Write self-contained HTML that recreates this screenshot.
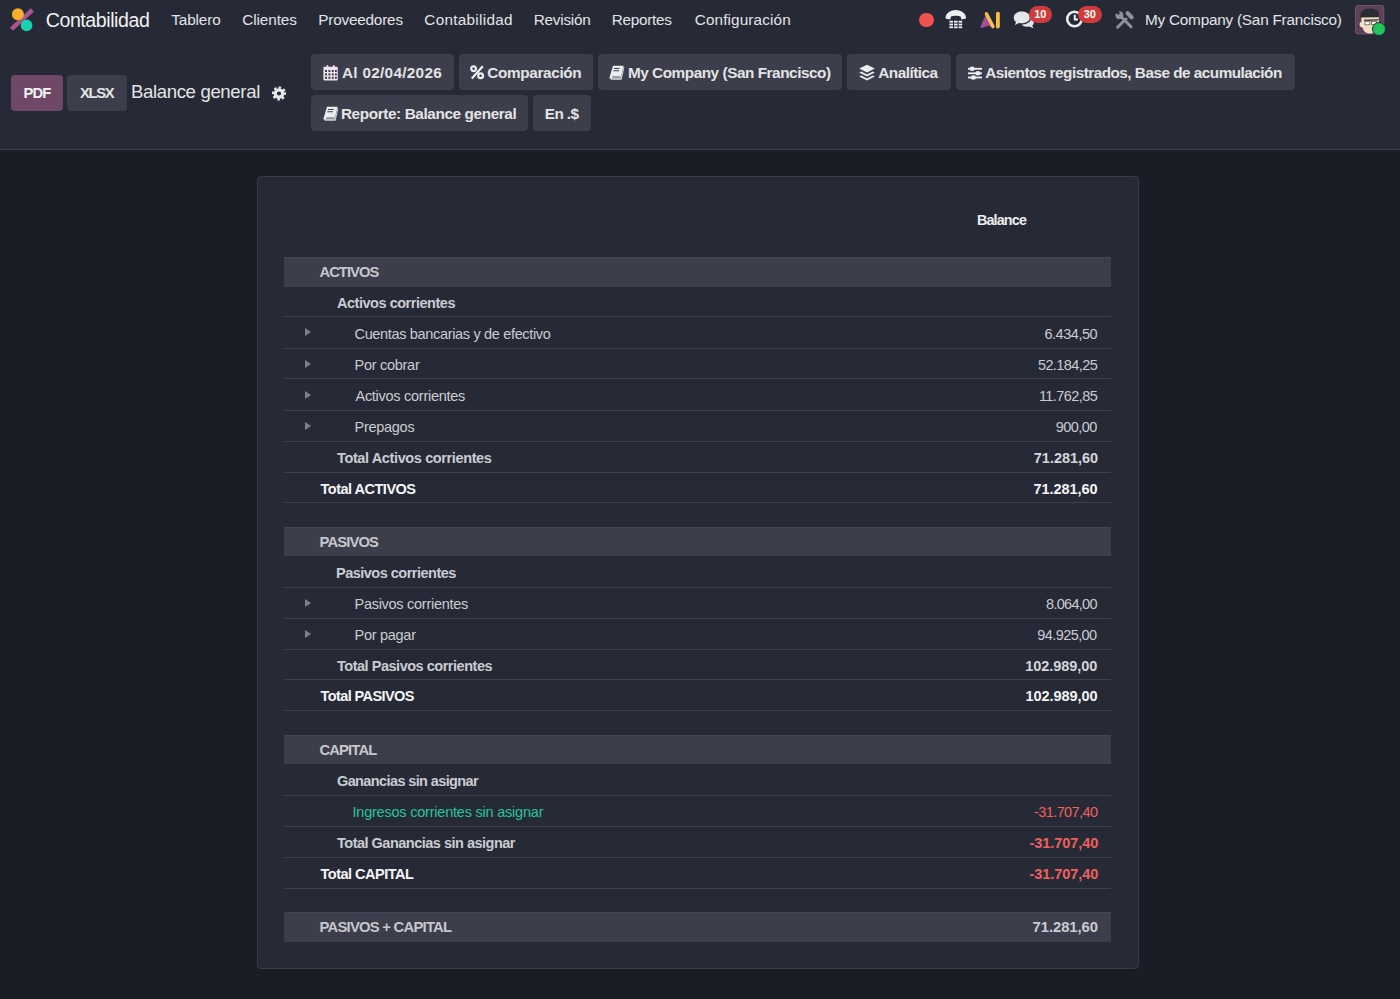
<!DOCTYPE html>
<html><head><meta charset="utf-8">
<style>
html,body{margin:0;padding:0;}
body{width:1400px;height:999px;overflow:hidden;background:#1B1D26;font-family:"Liberation Sans",sans-serif;position:relative;}
.a{position:absolute;}
.tx{position:absolute;white-space:nowrap;}
.hdr{position:absolute;left:0;top:0;width:1400px;height:149px;background:#262A36;border-bottom:1px solid #3A3D4A;}
.btn{position:absolute;height:36px;background:#3C3E4B;border-radius:4px;}
.card{position:absolute;left:257px;top:176px;width:882px;height:793px;background:#262A36;border:1px solid #393C48;border-radius:4px;box-sizing:border-box;}
.row{position:absolute;left:284px;width:827px;box-sizing:border-box;border-bottom:1px solid #3D404D;}
.bar{position:absolute;left:284px;width:827px;background:#3C3E4B;box-sizing:border-box;border-top:1px solid #444655;}
.car{position:absolute;left:305px;width:0;height:0;border-top:4.5px solid transparent;border-bottom:4.5px solid transparent;border-left:6px solid #7D808A;}
svg{position:absolute;overflow:visible;}
</style></head>
<body>
<div class="hdr"></div>

<!-- logo -->
<svg style="left:0;top:0" width="40" height="40">
  <line x1="11.5" y1="29.1" x2="32.3" y2="10" stroke="#A8558F" stroke-width="4.5"/>
  <circle cx="17.9" cy="14.2" r="6" fill="#F6AE2D"/>
  <circle cx="26.6" cy="25.4" r="5.8" fill="#19D1AE"/>
</svg>

<!-- right systray -->
<div class="a" style="left:919.3px;top:12.8px;width:14.5px;height:14.5px;border-radius:50%;background:#EF5350"></div>
<!-- phone -->
<svg style="left:940px;top:5px" width="30" height="30">
  <path d="M5.6 13.4 C5.2 8.6 10 5 15.8 5 C21.6 5 26.4 8.6 26 13.4 L21.4 14.6 L20.6 11.6 C18.8 10.6 12.8 10.6 11 11.6 L10.2 14.6 Z" fill="#EEEFF1"/>
  <g fill="#ECEDEF">
    <rect x="9.4" y="15.8" width="3.6" height="1.8"/><rect x="14" y="15.8" width="3.6" height="1.8"/><rect x="18.6" y="15.8" width="3.6" height="1.8"/>
    <rect x="9.4" y="18.6" width="3.6" height="1.8"/><rect x="14" y="18.6" width="3.6" height="1.8"/><rect x="18.6" y="18.6" width="3.6" height="1.8"/>
    <rect x="9.4" y="21.4" width="3.6" height="1.8"/><rect x="14" y="21.4" width="3.6" height="1.8"/><rect x="18.6" y="21.4" width="3.6" height="1.8"/>
  </g>
</svg>
<!-- AI -->
<svg style="left:975px;top:5px" width="30" height="30">
  <path d="M11.2 9 C9.6 12.5 7.6 16.6 6 20.2 C5 22.6 6.2 23.8 8.4 22.6 C10.6 21.4 12.6 20.6 14.6 21.2 C16 21.6 17.2 22.6 17.8 22.4 L14.2 15 Z" fill="#A34F98"/>
  <line x1="11.4" y1="8.8" x2="18" y2="21.6" stroke="#F6BF45" stroke-width="3.4" stroke-linecap="round"/>
  <line x1="22.9" y1="8.6" x2="22.9" y2="21.6" stroke="#F6BF45" stroke-width="3.8" stroke-linecap="round"/>
</svg>
<!-- chat -->
<svg style="left:1008px;top:2px" width="32" height="32">
  <path d="M13.5 9.6 C18.8 9.6 21.8 12.2 21.8 15.4 C21.8 18.6 18.8 21.2 13.5 21.2 C12.5 21.2 11.5 21.1 10.6 20.9 L7 23.3 L8 20 C6.6 19 5.8 17.3 5.8 15.4 C5.8 12.2 8.6 9.6 13.5 9.6 Z" fill="#E4E6EA"/>
  <path d="M22.8 16.8 C24.6 17.5 25.8 18.8 25.8 20.4 C25.8 21.6 25.2 22.7 24.2 23.4 L25.4 26.2 L21.2 24.6 C20.6 24.7 20 24.8 19.3 24.8 C16.8 24.8 14.8 24 13.6 22.6 C19 22.4 22.8 20.2 22.8 16.8 Z" fill="#E4E6EA"/>
</svg>
<div class="a" style="left:1029px;top:5.6px;width:22.6px;height:17.5px;border-radius:9px;background:#CF3B3B;color:#fff;font-weight:bold;font-size:11px;line-height:17.5px;text-align:center;">10</div>
<!-- clock -->
<svg style="left:1060px;top:5px" width="30" height="30">
  <circle cx="14.5" cy="14" r="7.3" fill="none" stroke="#ECEDEF" stroke-width="2.6"/>
  <path d="M14.8 9.8 L14.8 14.6 L18 14.6" stroke="#ECEDEF" stroke-width="2" fill="none"/>
</svg>
<div class="a" style="left:1078px;top:5.6px;width:23.6px;height:17.5px;border-radius:9px;background:#CF3B3B;color:#fff;font-weight:bold;font-size:11px;line-height:17.5px;text-align:center;">30</div>
<!-- tools -->
<svg style="left:1110px;top:5px" width="30" height="30">
  <g stroke="#8E9099" stroke-linecap="round" fill="none">
    <line x1="10.5" y1="11" x2="21" y2="21.8" stroke-width="3"/>
    <line x1="17.6" y1="8.2" x2="21.6" y2="12.2" stroke-width="4.2"/>
    <line x1="16" y1="14" x2="7.6" y2="22.2" stroke-width="3"/>
  </g>
  <circle cx="9.4" cy="10.2" r="3.9" fill="#8E9099"/>
  <rect x="6.2" y="5.4" width="2.8" height="4.2" fill="#262A36" transform="rotate(-45 7.6 7.5)"/>
  <line x1="12" y1="11.6" x2="14.2" y2="11.2" stroke="#262A36" stroke-width="0"/>
</svg>
<!-- avatar -->
<svg style="left:1354.8px;top:4.8px" width="30" height="30">
  <rect x="0" y="0" width="29.2" height="29.2" rx="3" fill="#5E405B"/>
  <rect x="0.5" y="0.5" width="28.2" height="28.2" rx="2.6" fill="none" stroke="#6E5069" stroke-width="1"/>
  <path d="M5 13 C5 6.5 9 3.4 14.6 3.4 C20 3.4 24 5.6 24 9.6 L23.6 12.6 L6 13.4 Z" fill="#2B2C30"/>
  <path d="M6.2 12.6 L23.8 12.2 L24 19.6 C23.6 24.6 20.4 28.2 15.4 28.6 C11 28.8 8.4 26.4 7.6 22.6 C5.6 22.6 4.2 21 4.6 18.8 C5 17.2 5.8 16.8 6.6 17 Z" fill="#F1DFC3"/>
  <path d="M9 14.6 L23.6 14 L23.6 15.6 L9 16.2 Z" fill="#5A4E4C"/>
  <rect x="10" y="16.6" width="4.8" height="3.2" fill="#FFFFFF" stroke="#6B5E5A" stroke-width="0.8"/>
  <rect x="16.4" y="16.4" width="5.2" height="3.2" fill="#FBF4EA" stroke="#6B5E5A" stroke-width="0.8"/>
</svg>
<div class="a" style="left:1371.8px;top:21.8px;width:14px;height:14px;border-radius:50%;background:#1FC45A;border:1px solid #262A36;box-sizing:border-box;"></div>

<!-- control panel buttons -->
<div class="btn" style="left:11px;top:74.8px;width:51.6px;background:#6E4866;"></div>
<div class="btn" style="left:67.2px;top:75px;width:59.4px;"></div>
<svg style="left:264px;top:78px" width="30" height="30">
  <g transform="translate(15 15.5)">
    <circle r="3.7" fill="none" stroke="#E8E9EC" stroke-width="3.2"/>
    <circle r="5.9" fill="none" stroke="#E8E9EC" stroke-width="2.4" stroke-dasharray="2.5 2.13" transform="rotate(-11)"/>
  </g>
</svg>

<div class="btn" style="left:311px;top:53.8px;width:143.2px;"></div>
<div class="btn" style="left:458.8px;top:53.8px;width:133.8px;"></div>
<div class="btn" style="left:597.6px;top:53.8px;width:244.5px;"></div>
<div class="btn" style="left:846.8px;top:53.8px;width:104px;"></div>
<div class="btn" style="left:956px;top:53.8px;width:339px;"></div>
<div class="btn" style="left:311px;top:94.8px;width:217px;"></div>
<div class="btn" style="left:533px;top:94.8px;width:57.8px;"></div>

<!-- calendar icon -->
<svg style="left:322.6px;top:64.6px" width="16" height="16">
  <path d="M0.4 2.8 Q0.4 1.8 1.4 1.8 L13.8 1.8 Q14.8 1.8 14.8 2.8 L14.8 14.6 Q14.8 15.6 13.8 15.6 L1.4 15.6 Q0.4 15.6 0.4 14.6 Z" fill="#EDE3EE"/>
  <rect x="3.4" y="0.2" width="2" height="3.2" rx="0.8" fill="#EDE3EE"/>
  <rect x="9.8" y="0.2" width="2" height="3.2" rx="0.8" fill="#EDE3EE"/>
  <g fill="#3C3E4B">
    <rect x="2" y="5" width="2" height="2"/><rect x="5.4" y="5" width="2" height="2"/><rect x="8.8" y="5" width="2" height="2"/><rect x="12" y="5" width="1.8" height="2"/>
    <rect x="2" y="8.4" width="2" height="2"/><rect x="5.4" y="8.4" width="2" height="2"/><rect x="8.8" y="8.4" width="2" height="2"/><rect x="12" y="8.4" width="1.8" height="2"/>
    <rect x="2" y="11.8" width="2" height="2"/><rect x="5.4" y="11.8" width="2" height="2"/><rect x="8.8" y="11.8" width="2" height="2"/><rect x="12" y="11.8" width="1.8" height="2"/>
  </g>
</svg>
<!-- percent icon -->
<svg style="left:470px;top:65px" width="16" height="16">
  <circle cx="3.6" cy="3.8" r="2.4" fill="none" stroke="#F0F0F2" stroke-width="2.2"/>
  <circle cx="10.6" cy="10.8" r="2.4" fill="none" stroke="#F0F0F2" stroke-width="2.2"/>
  <line x1="12.8" y1="1.2" x2="1.8" y2="13.6" stroke="#F0F0F2" stroke-width="2.2"/>
</svg>
<!-- book icons -->
<svg style="left:609px;top:65px" width="18" height="17">
  <path d="M4 0.8 L14.6 0.8 L11.6 13.8 L1.2 13.8 Q0.2 13.6 0.6 12.2 Z" fill="#ECEDEF"/>
  <path d="M14.6 2 L15.4 2.6 L12.6 14.8 L2 14.8 L1.2 13.8 L11.6 13.8 Z" fill="#D5D6DA"/>
  <rect x="5.8" y="3" width="5.6" height="1" fill="#3C3E4B" transform="skewX(-12)"/>
  <rect x="5.6" y="5.2" width="5.6" height="1" fill="#3C3E4B" transform="skewX(-12)"/>
  <rect x="3.2" y="11.6" width="8.4" height="0.9" fill="#3C3E4B"/>
</svg>
<svg style="left:322.6px;top:106px" width="18" height="17">
  <path d="M4 0.8 L14.6 0.8 L11.6 13.8 L1.2 13.8 Q0.2 13.6 0.6 12.2 Z" fill="#ECEDEF"/>
  <path d="M14.6 2 L15.4 2.6 L12.6 14.8 L2 14.8 L1.2 13.8 L11.6 13.8 Z" fill="#D5D6DA"/>
  <rect x="5.8" y="3" width="5.6" height="1" fill="#3C3E4B" transform="skewX(-12)"/>
  <rect x="5.6" y="5.2" width="5.6" height="1" fill="#3C3E4B" transform="skewX(-12)"/>
  <rect x="3.2" y="11.6" width="8.4" height="0.9" fill="#3C3E4B"/>
</svg>
<!-- layers icon -->
<svg style="left:859px;top:64px" width="17" height="17">
  <path d="M8 0.8 L15.8 4.6 L8 8.6 L0.2 4.6 Z" fill="#ECEDEF"/>
  <path d="M2.2 7.4 L8 10.4 L13.8 7.4 L15.8 8.6 L8 12.6 L0.2 8.6 Z" fill="#ECEDEF"/>
  <path d="M2.2 11.4 L8 14.4 L13.8 11.4 L15.8 12.6 L8 16.4 L0.2 12.6 Z" fill="#ECEDEF"/>
</svg>
<!-- sliders icon -->
<svg style="left:967px;top:65px" width="17" height="16">
  <g stroke="#ECEDEF" stroke-width="1.8">
    <line x1="1" y1="3.8" x2="15" y2="3.8"/><line x1="1" y1="8.3" x2="15" y2="8.3"/><line x1="1" y1="12.5" x2="15" y2="12.5"/>
  </g>
  <g fill="#ECEDEF">
    <ellipse cx="5.2" cy="3.8" rx="2.6" ry="2.2"/><ellipse cx="10.9" cy="8.3" rx="2.6" ry="2.2"/><ellipse cx="6.4" cy="12.5" rx="2.6" ry="2.2"/>
  </g>
</svg>

<div class="card"></div>
<div class="bar" style="top:257.00px;height:29.60px"></div>
<div class="row" style="top:286.60px;height:30.50px"></div>
<div class="row" style="top:317.10px;height:31.70px"></div>
<div class="row" style="top:348.80px;height:30.70px"></div>
<div class="row" style="top:379.50px;height:31.30px"></div>
<div class="row" style="top:410.80px;height:31.00px"></div>
<div class="row" style="top:441.80px;height:30.80px"></div>
<div class="row" style="top:472.60px;height:30.70px"></div>
<div class="bar" style="top:526.80px;height:29.30px"></div>
<div class="row" style="top:556.10px;height:31.80px"></div>
<div class="row" style="top:587.90px;height:31.10px"></div>
<div class="row" style="top:619.00px;height:30.80px"></div>
<div class="row" style="top:649.80px;height:30.40px"></div>
<div class="row" style="top:680.20px;height:30.80px"></div>
<div class="bar" style="top:734.60px;height:29.80px"></div>
<div class="row" style="top:764.40px;height:31.60px"></div>
<div class="row" style="top:796.00px;height:30.90px"></div>
<div class="row" style="top:826.90px;height:30.90px"></div>
<div class="row" style="top:857.80px;height:31.00px"></div>
<div class="bar" style="top:911.80px;height:30.30px"></div>
<div class="car" style="top:328.45px"></div>
<div class="car" style="top:359.65px"></div>
<div class="car" style="top:390.65px"></div>
<div class="car" style="top:421.80px"></div>
<div class="car" style="top:598.95px"></div>
<div class="car" style="top:629.90px"></div>
<div class="tx" id="brand" style="top:11.41px;font-size:19.6px;line-height:19.6px;color:#F1F1F1;letter-spacing:-0.436px;left:45.71px;">Contabilidad</div>
<div class="tx" id="nav0" style="top:12.15px;font-size:15.3px;line-height:15.3px;color:#E2E3E6;letter-spacing:-0.132px;left:171.30px;">Tablero</div>
<div class="tx" id="nav1" style="top:12.15px;font-size:15.3px;line-height:15.3px;color:#E2E3E6;letter-spacing:-0.085px;left:242.21px;">Clientes</div>
<div class="tx" id="nav2" style="top:12.15px;font-size:15.3px;line-height:15.3px;color:#E2E3E6;letter-spacing:-0.200px;left:318.30px;">Proveedores</div>
<div class="tx" id="nav3" style="top:12.15px;font-size:15.3px;line-height:15.3px;color:#E2E3E6;letter-spacing:0.288px;left:424.30px;">Contabilidad</div>
<div class="tx" id="nav4" style="top:12.15px;font-size:15.3px;line-height:15.3px;color:#E2E3E6;letter-spacing:-0.255px;left:533.80px;">Revisión</div>
<div class="tx" id="nav5" style="top:12.15px;font-size:15.3px;line-height:15.3px;color:#E2E3E6;letter-spacing:-0.286px;left:611.80px;">Reportes</div>
<div class="tx" id="nav6" style="top:12.15px;font-size:15.3px;line-height:15.3px;color:#E2E3E6;letter-spacing:0.133px;left:694.71px;">Configuración</div>
<div class="tx" id="company" style="top:12.45px;font-size:15.3px;line-height:15.3px;color:#E2E3E6;letter-spacing:-0.216px;left:1145.00px;">My Company (San Francisco)</div>
<div class="tx" id="pdf" style="top:86.27px;font-size:14.8px;line-height:14.8px;color:#F3F3F3;font-weight:bold;letter-spacing:-0.900px;left:23.60px;">PDF</div>
<div class="tx" id="xlsx" style="top:86.27px;font-size:14.8px;line-height:14.8px;color:#E4E4E4;font-weight:bold;letter-spacing:-1.333px;left:80.00px;">XLSX</div>
<div class="tx" id="title" style="top:83.16px;font-size:18.6px;line-height:18.6px;color:#E4E4E4;letter-spacing:-0.357px;left:130.90px;">Balance general</div>
<div class="tx" id="b_date" style="top:65.15px;font-size:15.3px;line-height:15.3px;color:#E4E4E4;font-weight:bold;letter-spacing:0.315px;left:341.90px;">Al 02/04/2026</div>
<div class="tx" id="b_comp" style="top:65.15px;font-size:15.3px;line-height:15.3px;color:#E4E4E4;font-weight:bold;letter-spacing:-0.340px;left:487.30px;">Comparación</div>
<div class="tx" id="b_comp2" style="top:65.15px;font-size:15.3px;line-height:15.3px;color:#E4E4E4;font-weight:bold;letter-spacing:-0.440px;left:627.90px;">My Company (San Francisco)</div>
<div class="tx" id="b_ana" style="top:65.15px;font-size:15.3px;line-height:15.3px;color:#E4E4E4;font-weight:bold;letter-spacing:-0.479px;left:878.21px;">Analítica</div>
<div class="tx" id="b_asi" style="top:65.15px;font-size:15.3px;line-height:15.3px;color:#E4E4E4;font-weight:bold;letter-spacing:-0.502px;left:985.25px;">Asientos registrados, Base de acumulación</div>
<div class="tx" id="b_rep" style="top:106.15px;font-size:15.3px;line-height:15.3px;color:#E4E4E4;font-weight:bold;letter-spacing:-0.375px;left:340.90px;">Reporte: Balance general</div>
<div class="tx" id="b_en" style="top:106.15px;font-size:15.3px;line-height:15.3px;color:#E4E4E4;font-weight:bold;letter-spacing:-0.600px;left:544.80px;">En .$</div>
<div class="tx" id="hbal" style="top:212.90px;font-size:14.3px;line-height:14.3px;color:#ECEDEF;font-weight:bold;letter-spacing:-0.833px;left:977.00px;">Balance</div>
<div class="tx" id="a_lbl" style="top:264.87px;font-size:14.8px;line-height:14.8px;color:#C5C7CD;font-weight:bold;letter-spacing:-1.000px;left:319.50px;">ACTIVOS</div>
<div class="tx" id="a_r0" style="top:295.58px;font-size:14.5px;line-height:14.5px;color:#C9CCD2;font-weight:bold;letter-spacing:-0.471px;left:337.00px;">Activos corrientes</div>
<div class="tx" id="a_r1" style="top:326.68px;font-size:14.5px;line-height:14.5px;color:#C9CCD2;letter-spacing:-0.333px;left:354.50px;">Cuentas bancarias y de efectivo</div>
<div class="tx" id="a_n1" style="top:326.68px;font-size:14.5px;line-height:14.5px;color:#C9CCD2;letter-spacing:-0.459px;right:302.84px;">6.434,50</div>
<div class="tx" id="a_r2" style="top:357.88px;font-size:14.5px;line-height:14.5px;color:#C9CCD2;letter-spacing:-0.275px;left:354.50px;">Por cobrar</div>
<div class="tx" id="a_n2" style="top:357.88px;font-size:14.5px;line-height:14.5px;color:#C9CCD2;letter-spacing:-0.584px;right:302.83px;">52.184,25</div>
<div class="tx" id="a_r3" style="top:388.88px;font-size:14.5px;line-height:14.5px;color:#C9CCD2;letter-spacing:-0.275px;left:355.50px;">Activos corrientes</div>
<div class="tx" id="a_n3" style="top:388.88px;font-size:14.5px;line-height:14.5px;color:#C9CCD2;letter-spacing:-0.584px;right:302.89px;">11.762,85</div>
<div class="tx" id="a_r4" style="top:420.03px;font-size:14.5px;line-height:14.5px;color:#C9CCD2;letter-spacing:-0.275px;left:354.50px;">Prepagos</div>
<div class="tx" id="a_n4" style="top:420.03px;font-size:14.5px;line-height:14.5px;color:#C9CCD2;letter-spacing:-0.584px;right:303.36px;">900,00</div>
<div class="tx" id="a_r5" style="top:450.93px;font-size:14.5px;line-height:14.5px;color:#C9CCD2;font-weight:bold;letter-spacing:-0.380px;left:337.00px;">Total Activos corrientes</div>
<div class="tx" id="a_n5" style="top:450.93px;font-size:14.5px;line-height:14.5px;color:#D4D6DB;font-weight:bold;letter-spacing:-0.025px;right:301.89px;">71.281,60</div>
<div class="tx" id="a_r6" style="top:481.68px;font-size:14.5px;line-height:14.5px;color:#F4F4F4;font-weight:bold;letter-spacing:-0.500px;left:320.50px;">Total ACTIVOS</div>
<div class="tx" id="a_n6" style="top:481.68px;font-size:14.5px;line-height:14.5px;color:#F4F4F4;font-weight:bold;letter-spacing:-0.047px;right:302.41px;">71.281,60</div>
<div class="tx" id="p_lbl" style="top:534.52px;font-size:14.8px;line-height:14.8px;color:#C5C7CD;font-weight:bold;letter-spacing:-0.875px;left:319.50px;">PASIVOS</div>
<div class="tx" id="p_r0" style="top:565.73px;font-size:14.5px;line-height:14.5px;color:#C9CCD2;font-weight:bold;letter-spacing:-0.504px;left:336.00px;">Pasivos corrientes</div>
<div class="tx" id="p_r1" style="top:597.18px;font-size:14.5px;line-height:14.5px;color:#C9CCD2;letter-spacing:-0.275px;left:354.50px;">Pasivos corrientes</div>
<div class="tx" id="p_n1" style="top:597.18px;font-size:14.5px;line-height:14.5px;color:#C9CCD2;letter-spacing:-0.714px;right:303.19px;">8.064,00</div>
<div class="tx" id="p_r2" style="top:628.13px;font-size:14.5px;line-height:14.5px;color:#C9CCD2;letter-spacing:-0.275px;left:354.50px;">Por pagar</div>
<div class="tx" id="p_n2" style="top:628.13px;font-size:14.5px;line-height:14.5px;color:#C9CCD2;letter-spacing:-0.579px;right:303.41px;">94.925,00</div>
<div class="tx" id="p_r3" style="top:658.73px;font-size:14.5px;line-height:14.5px;color:#C9CCD2;font-weight:bold;letter-spacing:-0.478px;left:337.00px;">Total Pasivos corrientes</div>
<div class="tx" id="p_n3" style="top:658.73px;font-size:14.5px;line-height:14.5px;color:#D4D6DB;font-weight:bold;letter-spacing:-0.069px;right:302.83px;">102.989,00</div>
<div class="tx" id="p_r4" style="top:689.33px;font-size:14.5px;line-height:14.5px;color:#F4F4F4;font-weight:bold;letter-spacing:-0.584px;left:320.50px;">Total PASIVOS</div>
<div class="tx" id="p_n4" style="top:689.33px;font-size:14.5px;line-height:14.5px;color:#F4F4F4;font-weight:bold;letter-spacing:-0.047px;right:302.39px;">102.989,00</div>
<div class="tx" id="c_lbl" style="top:742.57px;font-size:14.8px;line-height:14.8px;color:#C5C7CD;font-weight:bold;letter-spacing:-0.875px;left:319.50px;">CAPITAL</div>
<div class="tx" id="c_r0" style="top:773.93px;font-size:14.5px;line-height:14.5px;color:#C9CCD2;font-weight:bold;letter-spacing:-0.612px;left:337.00px;">Ganancias sin asignar</div>
<div class="tx" id="c_r1" style="top:805.18px;font-size:14.5px;line-height:14.5px;color:#29C29D;letter-spacing:-0.216px;left:352.50px;">Ingresos corrientes sin asignar</div>
<div class="tx" id="c_n1" style="top:805.18px;font-size:14.5px;line-height:14.5px;color:#F0605D;letter-spacing:-0.584px;right:302.53px;">-31.707,40</div>
<div class="tx" id="c_r2" style="top:836.08px;font-size:14.5px;line-height:14.5px;color:#C9CCD2;font-weight:bold;letter-spacing:-0.502px;left:337.00px;">Total Ganancias sin asignar</div>
<div class="tx" id="c_n2" style="top:836.08px;font-size:14.5px;line-height:14.5px;color:#F0605D;font-weight:bold;letter-spacing:-0.047px;right:301.62px;">-31.707,40</div>
<div class="tx" id="c_r3" style="top:867.03px;font-size:14.5px;line-height:14.5px;color:#F4F4F4;font-weight:bold;letter-spacing:-0.504px;left:320.50px;">Total CAPITAL</div>
<div class="tx" id="c_n3" style="top:867.03px;font-size:14.5px;line-height:14.5px;color:#F0605D;font-weight:bold;letter-spacing:-0.047px;right:301.62px;">-31.707,40</div>
<div class="tx" id="pc_lbl" style="top:920.02px;font-size:14.8px;line-height:14.8px;color:#C5C7CD;font-weight:bold;letter-spacing:-0.750px;left:319.50px;">PASIVOS + CAPITAL</div>
<div class="tx" id="pc_tot" style="top:920.02px;font-size:14.8px;line-height:14.8px;color:#C9CCD2;font-weight:bold;letter-spacing:-0.047px;right:302.08px;">71.281,60</div>
</body></html>
